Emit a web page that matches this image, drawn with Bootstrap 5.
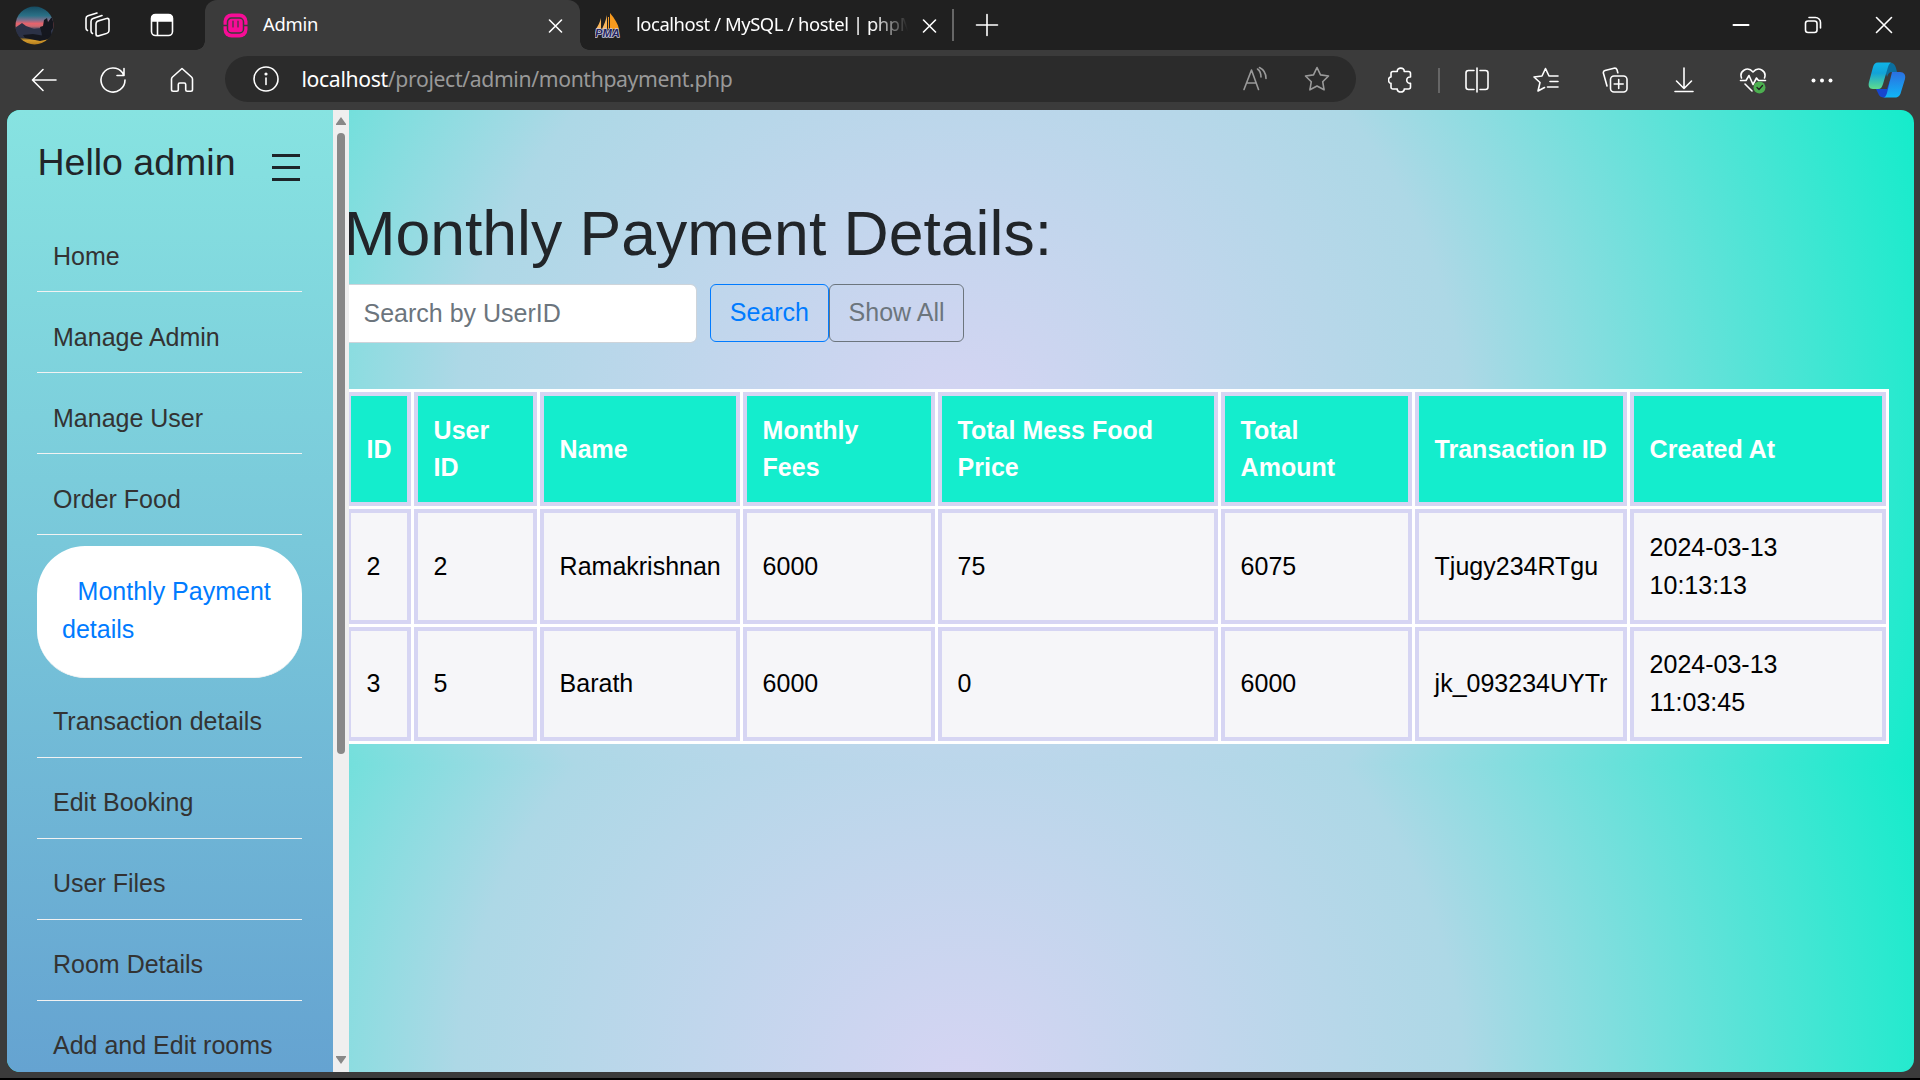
<!DOCTYPE html>
<html lang="en">
<head>
<meta charset="utf-8">
<meta name="viewport" content="width=device-width, initial-scale=1">
<title>Admin</title>
<link href="https://cdn.jsdelivr.net/npm/bootstrap@5.3.0/dist/css/bootstrap.min.css" rel="stylesheet">
<style>
html,body{height:100%}
body{width:1920px;height:1080px;overflow:hidden;background:#3b3b3b;border-bottom:2px solid #000;font-family:"Liberation Sans",Arial,sans-serif;font-size:25px;line-height:37.5px;color:#212529}
svg{display:block;flex:none;fill:none;stroke:#fff;stroke-width:1.6;stroke-linecap:round;stroke-linejoin:round}
/* browser chrome */
.chrome-ui{font-family:"Noto Sans","Open Sans",sans-serif;color:#fff}
.tab-strip{height:50px;background:#202020}
.slot{flex:none;display:flex;align-items:center;justify-content:center;height:100%}
.s-69{width:69px}.s-66{width:66px}
.tab-on{width:375px;height:50px;background:#3b3b3b;border-radius:12px 12px 0 0;padding:0 17px 0 18px;position:relative;margin-left:6px}
.tab-on::before,.tab-on::after{content:"";position:absolute;bottom:0;width:9px;height:9px}
.tab-on::before{left:-9px;background:radial-gradient(circle at 0 0,#202020 8.5px,#3b3b3b 9px)}
.tab-on::after{right:-9px;background:radial-gradient(circle at 100% 0,#202020 8.5px,#3b3b3b 9px)}
.tab-off{width:372px;height:50px;padding:0 15px 0 15px}
.tab-label{font-size:18.4px;line-height:26px;white-space:nowrap;letter-spacing:-.25px;margin:-2px 0 0 15px}
.tab-fade{width:272px;overflow:hidden;letter-spacing:-.43px;-webkit-mask-image:linear-gradient(90deg,#000 87%,transparent);mask-image:linear-gradient(90deg,#000 87%,transparent)}
.sep-a{width:2px;height:32px;background:#666}
.sep-b{width:2px;height:25px;background:#666}
.tool-row{height:60px;padding:0 0 0 9px}
.address{width:1131px;height:46px;border-radius:23px;background:#2b2b2b;padding:0 26px 0 28px;margin:-2px 0 0 9px}
.url-text{font-size:21.2px;line-height:30px;color:#999;white-space:nowrap;margin-left:22.5px;letter-spacing:-.36px}
.url-text span{color:#fff}
.dim{stroke:#9a9a9a}
/* page */
.viewport-box{width:1907px;height:962px;margin-left:7px;border-radius:13px;overflow:hidden;background:radial-gradient(circle,#d6d4f3,#add8e6,#14eccb) 0 0/1907px 655px repeat-y}
.side-nav{width:326px;background:linear-gradient(#87e3e1,#79c8da 45%,#65a3d1);padding:0 31px 0 30px;overflow:hidden}
.brand-row{height:101px}
.brand-row h2{font-size:37.5px;line-height:46px;font-weight:400;margin:29px 0 0 .5px;white-space:nowrap}
.burger{margin:44px 2px 0 0}
.side-nav a{display:block;text-decoration:none;color:#333;height:81px;padding:26.5px 0 0 16px;border-bottom:1px solid #f2f2f2;white-space:nowrap}
.side-nav a.current{height:132px;margin:11px 0 -1.5px;background:#fff;border-radius:48px;color:#007bff;padding:27px 0 0 25px;text-indent:15.6px;white-space:normal}
.bar{width:16px;background:#efefef}
.bar-thumb{width:8px;height:621px;border-radius:4px;background:#888;margin-top:8px}
.content-pane{width:1565px;overflow:hidden}
.content-inner{margin-left:-7px}
.content-inner h1{font-size:62.5px;line-height:75px;font-weight:400;margin:86px 0 0 1.4px;white-space:nowrap}
.find-row{margin-top:13px;height:59px}
.find-row .form-control{width:355px;height:59px;font-size:25px;padding:0 20.5px;border:1px solid #ced4da;border-radius:6px}
.find-row .form-control::placeholder{color:#6c757d}
.find-row .btn{height:58px;font-size:25px;line-height:36px;border-radius:6px;padding:9px 18.8px 11px}
.btn-find{color:#007bff;border-color:#007bff;margin-left:13px}
.btn-all{color:#6c757d;border-color:#6c757d}
.pay-grid{width:1545px;margin:46px 0 0 2px;table-layout:fixed;border-collapse:separate;border-spacing:3px;background:#fff;color:#000}
.pay-grid th,.pay-grid td{border:4px solid #d6d5f3;padding:0 0 2px 15.6px;vertical-align:middle;white-space:nowrap;background:#f6f6f9;height:115px;line-height:38px}
.pay-grid tr:last-child td{height:114px}
.pay-grid tr:last-child th,.pay-grid th{background:#14edcd;color:#fff;height:114px;line-height:37px;padding-bottom:0}
</style>
<script src="https://cdn.jsdelivr.net/npm/bootstrap@5.3.0/dist/js/bootstrap.bundle.min.js"></script>
</head>
<body>
<header class="chrome-ui">
  <div class="tab-strip d-flex align-items-center">
    <div class="slot s-69">
      <svg width="39" height="39" viewBox="0 0 39 39" style="stroke:none">
        <defs><linearGradient id="dusk" x1="0" y1="0" x2="0" y2="1"><stop offset="0" stop-color="#14495f"/><stop offset=".25" stop-color="#2b7187"/><stop offset=".36" stop-color="#7d6f8c"/><stop offset=".45" stop-color="#e8626c"/><stop offset=".52" stop-color="#c96a70"/><stop offset=".6" stop-color="#39435f"/><stop offset=".8" stop-color="#22262f"/><stop offset=".88" stop-color="#d39a2c"/><stop offset="1" stop-color="#b07a1c"/></linearGradient><clipPath id="round"><circle cx="19.5" cy="19.5" r="19"/></clipPath></defs>
        <g clip-path="url(#round)"><path fill="url(#dusk)" d="M0 0h39v39H0z"/><path fill="#2b3146" d="M0 22l7-5 4 3 8 3 7-1v8l-10 2-16-1z"/><path fill="#15171f" d="M25 21l3-1 1-6 3-2 1 4 3-4 3-1v10l-3 4 1 6-3 4-4-5-2 3z"/><path fill="#15171f" d="M8 29l10-1 12 2 9-2v4l-14 3-15-3z"/></g>
      </svg>
    </div>
    <div class="slot" style="width:55px">
      <svg width="26" height="26" viewBox="0 0 26 26"><rect x="12" y="8" width="13" height="15" rx="2.5" transform="skewY(-16) translate(0 5)"/><path d="M8.500 21.500c-1-.4-1.500-1.200-1.500-2.500V9.500c0-1.500.6-2.400 2-2.900L18 3.500M3.500 18.500C2.400 18 2 17.300 2 16V6.500C2 5 2.600 4.200 4 3.700L13 1"/></svg>
    </div>
    <div class="slot" style="width:75px">
      <svg width="24" height="24" viewBox="0 0 24 24"><rect x="1.500" y="1.500" width="21" height="21" rx="4"/><path fill="#fff" d="M2 8V5a3 3 0 013-3h14a3 3 0 013 3v3z"/><path d="M7.500 8v14"/></svg>
    </div>
    <div class="tab-on d-flex align-items-center">
      <svg width="25" height="25" viewBox="0 0 25 25" style="stroke:none"><rect x=".5" y=".5" width="24" height="24" rx="8" fill="#f70c96"/><path stroke="#3b3b3b" stroke-width="1.500" d="M0 12.500h4.500M20.500 12.500H25M4.500 14V9a4 4 0 014-4h8a4 4 0 014 4v7a4 4 0 01-4 4h-8a4 4 0 01-4-4z"/><path stroke="#3b3b3b" stroke-width="1.200" d="M10 8v6M15 8v6"/></svg>
      <div class="tab-label">Admin</div>
      <svg class="ms-auto" width="15" height="15" viewBox="0 0 15 15"><path d="M1.500 2l12 12m0-12l-12 12"/></svg>
    </div>
    <div class="tab-off d-flex align-items-center">
      <svg width="26" height="26" viewBox="0 0 26 26" style="stroke:none"><path fill="#f79a1e" d="M15 1c5 6 8 11 9 16h-9z"/><path fill="#f9b75c" d="M12 3v14H7c2-4 4-9 5-14zM6 6v11H1c2-3 4-7 5-11z"/><path fill="#f79a1e" d="M13 5h1v12h-1z"/><text x="0" y="25" font-family="Liberation Sans" font-weight="700" font-style="italic" font-size="10.500" textLength="25" lengthAdjust="spacingAndGlyphs" fill="#262660" stroke="#c9c9dd" stroke-width="1.500" paint-order="stroke">PMA</text></svg>
      <div class="tab-label tab-fade">localhost / MySQL / hostel | phpM</div>
      <svg class="ms-auto" width="15" height="15" viewBox="0 0 15 15"><path d="M1.500 2l12 12m0-12l-12 12"/></svg>
    </div>
    <div class="sep-a"></div>
    <div class="slot" style="width:66px"><svg width="24" height="24" viewBox="0 0 24 24"><path d="M12 1.500v21M1.500 12h21"/></svg></div>
    <div class="d-flex h-100 ms-auto">
      <div class="slot" style="width:72px"><svg width="18" height="18" viewBox="0 0 18 18"><path stroke-width="2" d="M1.500 9h15"/></svg></div>
      <div class="slot" style="width:71px"><svg width="18" height="18" viewBox="0 0 18 18"><rect x="1.500" y="5" width="11.500" height="11.500" rx="2.500"/><path d="M5 1.500h6.500a5 5 0 015 5V12"/></svg></div>
      <div class="slot" style="width:72px"><svg width="18" height="18" viewBox="0 0 18 18"><path d="M1.500 1.500l15 15m0-15l-15 15"/></svg></div>
    </div>
  </div>
  <div class="tool-row d-flex align-items-center">
    <div class="slot s-69"><svg width="26" height="26" viewBox="0 0 26 26"><path d="M25 13H1.500M12 2.500L1.500 13 12 23.500"/></svg></div>
    <div class="slot s-69"><svg width="26" height="26" viewBox="0 0 26 26"><path d="M25 13a12 12 0 11-2.500-7.300L23.500 8M24 1.500V8.500h-7"/></svg></div>
    <div class="slot s-69"><svg width="26" height="26" viewBox="0 0 26 26"><path d="M13 1.500L3.500 10c-.7.700-1 1.300-1 2.200V22.500c0 1 .6 1.700 1.700 1.700h3.600c1 0 1.500-.6 1.500-1.500V17.500c0-1 .6-1.500 1.500-1.500h4.400c1 0 1.500.6 1.500 1.500v5.200c0 1 .6 1.500 1.500 1.500h3.600c1 0 1.700-.7 1.700-1.700V12.200c0-.9-.3-1.500-1-2.200z"/></svg></div>
    <div class="address d-flex align-items-center flex-shrink-0">
      <svg width="26" height="26" viewBox="0 0 26 26"><circle cx="13" cy="13" r="12"/><path d="M13 12v6.500"/><circle cx="13" cy="8" r=".8" fill="#fff"/></svg>
      <div class="url-text"><span>localhost</span>/project/admin/monthpayment.php</div>
      <svg class="dim ms-auto" width="26" height="26" viewBox="0 0 26 26"><path d="M2 23.500L9.500 4 16.500 23.500M4.500 17H14M15.500 3c2 1.500 3.500 4.500 3.500 8M17.500 1.500c4 2 6.500 6 6.500 11"/></svg>
      <svg class="dim" style="margin-left:36px" width="26" height="26" viewBox="0 0 26 26"><path d="M13 1.500l3.500 7.400 8 1.100-5.800 5.700 1.400 8.100L13 20l-7.100 3.800 1.400-8.100L1.500 10l8-1.100z"/></svg>
    </div>
    <div class="slot" style="width:82px"><svg width="26" height="26" viewBox="0 0 26 26" style="margin-left:7px"><path d="M5 4.500h4.300c-.5-4.500 7.400-4.500 6.900 0h4.300c1.300 0 2 .7 2 2V10c-5-.7-5 7 0 6.300v3.700c0 1.300-.7 2-2 2h-4.300c.5 4-7.400 4-6.900 0H5c-1.300 0-2-.7-2-2v-3.700C0 16.500-.500 10 3 10V6.500c0-1.300.7-2 2-2z"/></svg></div>
    <div class="sep-b"></div>
    <div class="slot s-69" style="margin-left:2px"><svg width="26" height="26" viewBox="0 0 26 26"><path d="M10 3.500H4.500c-1.500 0-2.500 1-2.500 2.500v14c0 1.500 1 2.500 2.500 2.500H10M16 3.500h5.500c1.500 0 2.500 1 2.500 2.500v14c0 1.500-1 2.500-2.500 2.500H16M13 1v24"/></svg></div>
    <div class="slot s-69"><svg width="26" height="26" viewBox="0 0 26 26"><path d="M16 9l-3.500-7.500L9 9l-8 1 6 5.500L5 24l6.500-3.500M16 9h9M17 14.500h8M14.500 20H25"/></svg></div>
    <div class="slot s-69"><svg width="26" height="26" viewBox="0 0 26 26"><path d="M5 19L1.500 6.500C1 5 1.600 4 3 3.500l9-2.300c1.500-.4 2.500.2 3 1.600l.8 3"/><rect x="8.500" y="9" width="16.500" height="16" rx="3.500"/><path d="M16.700 12.500v9M12.200 17h9"/></svg></div>
    <div class="slot s-69"><svg width="26" height="26" viewBox="0 0 26 26"><path d="M13 1v20M5.500 14l7.500 7.500 7.500-7.500M4 24.500h18"/></svg></div>
    <div class="slot s-69"><svg width="28" height="28" viewBox="0 0 28 28"><path d="M2.500 12C0 5 8.500-.5 14 6c5.500-6.500 14-1 11.500 6M1.500 14.500h5.500l3-5 4 9 3.500-6.500 2 2.500h7M6 18l7 7"/><circle cx="20.500" cy="21.500" r="6" fill="#4caf50" stroke="none"/><path stroke="#222" stroke-width="1.300" d="M18 21.500l2 2 3.500-4"/></svg></div>
    <div class="slot s-69"><svg width="26" height="26" viewBox="0 0 26 26" style="stroke:none;fill:#fff"><circle cx="4.500" cy="13.500" r="2"/><circle cx="13" cy="13.500" r="2"/><circle cx="21.500" cy="13.500" r="2"/></svg></div>
    <div class="slot" style="width:62px">
      <svg width="38" height="36" viewBox="0 0 38 36" style="stroke:none">
        <defs><linearGradient id="ca" x1="0" y1="0" x2="0" y2="1"><stop offset="0" stop-color="#0fb5e8"/><stop offset=".4" stop-color="#12a3d8"/><stop offset="1" stop-color="#5fdc8c"/></linearGradient><linearGradient id="cb" x1="0" y1="0" x2="0" y2="1"><stop offset="0" stop-color="#2b6fe0"/><stop offset="1" stop-color="#10b6f7"/></linearGradient></defs>
        <path fill="#0b6f9f" d="M15 1h8c3 0 4 2 5 5l1 4h-5c-3 0-4 2-5 5z"/>
        <path fill="#1746cf" d="M8 27h11l3-9 2 1-4 13c-1 3-2 3.500-4 3.500-3 0-5-1.500-6-4.500z"/>
        <path fill="url(#ca)" d="M10 .5h14c-2 0-3 1.500-4 4.500l-5 17c-1 3-2 5-5 5H5c-4 0-5-3-4-7L5 5C6 2 7 .5 10 .5z"/>
        <path fill="url(#cb)" d="M24 10h8c4 0 6 3 5 7l-4 13c-1 4-3 5.500-6 5.500H15c2 0 3-1.500 4-4.500z"/>
      </svg>
    </div>
  </div>
</header>
<div class="viewport-box d-flex">
  <nav class="side-nav flex-shrink-0">
    <div class="brand-row d-flex justify-content-between">
      <h2>Hello admin</h2>
      <svg class="burger" width="28" height="28" viewBox="0 0 28 28"><path style="stroke:#1d2429;stroke-width:3;stroke-linecap:butt" d="M0 1.500h28M0 13.500h28M0 25.500h28"/></svg>
    </div>
    <a href="#">Home</a>
    <a href="#">Manage Admin</a>
    <a href="#">Manage User</a>
    <a href="#">Order Food</a>
    <a href="#" class="current">Monthly Payment details</a>
    <a href="#">Transaction details</a>
    <a href="#">Edit Booking</a>
    <a href="#">User Files</a>
    <a href="#">Room Details</a>
    <a href="#">Add and Edit rooms</a>
  </nav>
  <div class="bar d-flex flex-column align-items-center flex-shrink-0">
    <svg style="margin-top:7px;stroke:none;fill:#888" width="10" height="8" viewBox="0 0 10 8"><path d="M5 0l5 7v1H0V7z"/></svg>
    <div class="bar-thumb"></div>
    <svg class="mt-auto" style="margin-bottom:8px;stroke:none;fill:#888" width="10" height="8" viewBox="0 0 10 8"><path d="M5 8l5-7V0H0v1z"/></svg>
  </div>
  <main class="content-pane">
    <div class="content-inner">
      <h1>Monthly Payment Details:</h1>
      <form class="find-row d-flex">
        <input class="form-control flex-shrink-0" type="text" placeholder="Search by UserID">
        <button class="btn btn-find" type="button">Search</button>
        <button class="btn btn-all" type="button">Show All</button>
      </form>
      <table class="pay-grid">
        <colgroup><col style="width:64px"><col style="width:123px"><col style="width:200px"><col style="width:192px"><col style="width:280px"><col style="width:191px"><col style="width:212px"><col style="width:256px"></colgroup>
        <thead><tr><th>ID</th><th>User<br>ID</th><th>Name</th><th>Monthly<br>Fees</th><th>Total Mess Food<br>Price</th><th>Total<br>Amount</th><th>Transaction ID</th><th>Created At</th></tr></thead>
        <tbody>
          <tr><td>2</td><td>2</td><td>Ramakrishnan</td><td>6000</td><td>75</td><td>6075</td><td>Tjugy234RTgu</td><td>2024-03-13<br>10:13:13</td></tr>
          <tr><td>3</td><td>5</td><td>Barath</td><td>6000</td><td>0</td><td>6000</td><td>jk_093234UYTr</td><td>2024-03-13<br>11:03:45</td></tr>
        </tbody>
      </table>
    </div>
  </main>
</div>
</body>
</html>
